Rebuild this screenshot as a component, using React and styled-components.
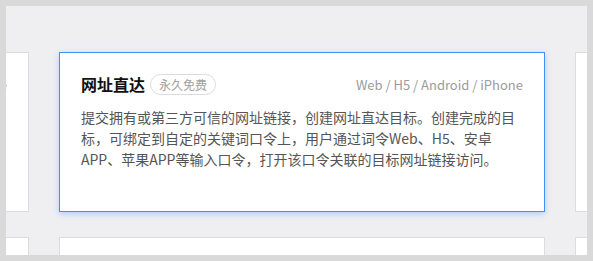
import React from "react";
import styled, { createGlobalStyle } from "styled-components";

const GlobalStyle = createGlobalStyle`
  html, body {
    margin: 0;
    padding: 0;
    background: #d9d9d9;
  }
  * {
    box-sizing: border-box;
  }
`;

export const Frame = styled.div`
  width: 593px;
  height: 261px;
  border: 6px solid #d9d9d9;
  background: #efeff2;
  overflow: hidden;
  font-family: "Noto Sans CJK SC", "Noto Sans", sans-serif;
`;

export const Grid = styled.div`
  display: grid;
  grid-template-columns: repeat(3, 486px);
  grid-auto-rows: 160px;
  column-gap: 30px;
  row-gap: 25px;
  margin-left: -463px;
  padding-top: 46px;
`;

export const Card = styled.div`
  background: #fff;
  border: 1px solid ${({ active }) => (active ? "#3f91f7" : "#dcdcdc")};
  box-shadow: ${({ active }) =>
    active ? "0 2px 6px rgba(64, 140, 255, 0.35)" : "none"};
  padding: 19px 21px;
  display: flex;
  flex-direction: column;
  gap: 11px;
`;

export const CardHead = styled.div`
  display: flex;
  align-items: center;
  height: 24px;
`;

export const Title = styled.span`
  font-size: 16px;
  font-weight: 700;
  color: #111;
  line-height: 24px;
`;

export const Badge = styled.span`
  margin-left: 5px;
  height: 21px;
  padding: 0 8px;
  border: 1px solid #dcdcdc;
  border-radius: 11px;
  font-size: 12px;
  line-height: 19px;
  color: #a0a0a0;
`;

export const Platforms = styled.span`
  margin-left: auto;
  font-size: 13px;
  color: #9c9c9c;
  white-space: nowrap;
`;

export const Desc = styled.p`
  margin: 0;
  font-size: 14px;
  line-height: 21px;
  color: #555;
`;

const items = [
  { active: false },
  { active: true },
  { active: false },
  { active: false },
  { active: false },
  { active: false },
];

function App() {
  return (
    <>
      <GlobalStyle />
      <Frame>
        <Grid>
          {items.map((it, i) => (
            <Card key={i} active={it.active}>
              <CardHead>
                <Title>网址直达</Title>
                <Badge>永久免费</Badge>
                <Platforms>Web / H5 / Android / iPhone</Platforms>
              </CardHead>
              <Desc>
                提交拥有或第三方可信的网址链接，创建网址直达目标。创建完成的目标，可绑定到自定的关键词口令上，用户通过词令Web、H5、安卓APP、苹果APP等输入口令，打开该口令关联的目标网址链接访问。
              </Desc>
            </Card>
          ))}
        </Grid>
      </Frame>
    </>
  );
}

export default App;
